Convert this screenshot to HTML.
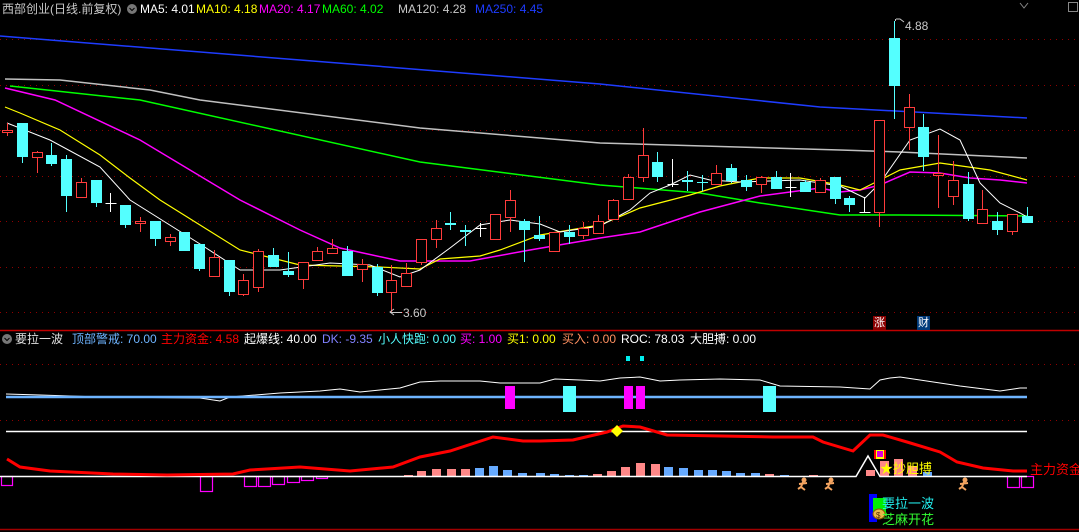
<!DOCTYPE html>
<html><head><meta charset="utf-8">
<style>
html,body{margin:0;padding:0;background:#000;width:1079px;height:532px;overflow:hidden;}
body{position:relative;font-family:"Liberation Sans","Noto Sans CJK SC",sans-serif;font-size:12px;}
.t{position:absolute;white-space:nowrap;line-height:14px;}
svg{position:absolute;left:0;top:0;}
</style></head><body>
<svg id="s" width="1079" height="532" xmlns="http://www.w3.org/2000/svg"></svg>
<div class="t" style="left:2px;top:2px;color:#c8c8c8">西部创业(日线.前复权)</div>
<div class="t" style="left:140px;top:2px;color:#fff">MA5: 4.01</div>
<div class="t" style="left:196px;top:2px;color:#ff0">MA10: 4.18</div>
<div class="t" style="left:259px;top:2px;color:#f0f">MA20: 4.17</div>
<div class="t" style="left:322px;top:2px;color:#0f0">MA60: 4.02</div>
<div class="t" style="left:398px;top:2px;color:#c8c8c8">MA120: 4.28</div>
<div class="t" style="left:475px;top:2px;color:#1e3cff">MA250: 4.45</div>
<div class="t" style="left:905px;top:19px;color:#c8c8c8">4.88</div>
<div class="t" style="left:403px;top:306px;color:#c8c8c8">3.60</div>
<div class="t" style="left:15px;top:332px;color:#e0e0e0">要拉一波</div>
<div class="t" style="left:72px;top:332px;color:#6eb4ff">顶部警戒: 70.00</div>
<div class="t" style="left:161px;top:332px;color:#f00">主力资金: 4.58</div>
<div class="t" style="left:244px;top:332px;color:#fff">起爆线: 40.00</div>
<div class="t" style="left:322px;top:332px;color:#8080ff">DK: -9.35</div>
<div class="t" style="left:378px;top:332px;color:#5ff">小人快跑: 0.00</div>
<div class="t" style="left:460px;top:332px;color:#f0f">买: 1.00</div>
<div class="t" style="left:507px;top:332px;color:#ff0">买1: 0.00</div>
<div class="t" style="left:562px;top:332px;color:#ff9060">买入: 0.00</div>
<div class="t" style="left:621px;top:332px;color:#fff">ROC: 78.03</div>
<div class="t" style="left:690px;top:332px;color:#fff">大胆搏: 0.00</div>
<div class="t" style="left:1030px;top:463px;color:#f00;font-size:13px">主力资金</div>
<div class="t" style="left:880px;top:462px;color:#ff0;font-size:13px">★抄胆搏</div>
<div class="t" style="left:882px;top:497px;color:#2ee;font-size:13px">要拉一波</div>
<div class="t" style="left:882px;top:513px;color:#3f3;font-size:13px">芝麻开花</div>
<div class="t" style="left:873px;top:316px;width:13px;height:14px;background:#8b0000;color:#fff;font-size:11px;text-align:center">涨</div>
<div class="t" style="left:917px;top:316px;width:13px;height:14px;background:#003a7a;color:#fff;font-size:11px;text-align:center">财</div>
<script>
var s=document.getElementById('s'),h='';
function L(x1,y1,x2,y2,c,w,d){h+='<line x1="'+x1+'" y1="'+y1+'" x2="'+x2+'" y2="'+y2+'" stroke="'+c+'" stroke-width="'+(w||1)+'"'+(d?' stroke-dasharray="'+d+'"':'')+'/>';}
function R(x,y,w,hh,f,st){h+='<rect x="'+x+'" y="'+y+'" width="'+w+'" height="'+hh+'" fill="'+(f||'none')+'"'+(st?' stroke="'+st+'"':'')+'/>';}
function P(pts,c,w){h+='<polyline fill="none" stroke="'+c+'" stroke-width="'+(w||1)+'" points="'+pts+'"/>';}
[39,85,130,176,221,267,312,364,420].forEach(function(y){L(0,y+.5,1079,y+.5,'#900000',1,'1 5');});
L(0,330.5,1079,330.5,'#c00000',1.5);L(0,529.5,1079,529.5,'#a00000',1.5);
P('0,36 300,60 600,84 820,107 1027,118','#1e3cff',1.5);
P('5,79 60,80 150,90 200,100 420,128 600,143 840,150 900,152 1027,158','#c0c0c0',1.5);
P('10,86 140,100 420,162 600,185 700,193 760,203 840,215 900,215 1027,216','#0f0',1.5);
P('5,88 55,100 140,140 240,200 300,230 340,248 400,261 470,261 530,250 600,238 640,232 700,212 760,196 820,188 840,192 860,190 880,185 910,172 940,173 970,178 1000,180 1027,183','#f0f',1.5);
P('5,107 20,113 60,130 100,155 130,178 160,200 200,225 240,250 300,265 380,267 420,269 440,259 480,256 500,250 540,235 600,225 640,208 690,195 720,186 760,178 800,178 840,185 860,190 900,170 940,163 990,170 1027,180','#ff0',1.2);
P('7,123 50,140 100,167 130,200 200,244 240,270 280,270 330,263 370,265 400,277 420,270 450,248 480,225 510,220 540,224 560,232 600,226 630,210 650,193 670,185 690,175 710,180 740,182 800,180 840,186 865,198 880,183 910,140 940,129 960,140 980,183 1000,203 1020,213 1027,217','#fff',1);
var C=[['r',130,132,123,136],['c',123,157,123,163],['r',152,157,151,173],['c',155,164,143,166],['c',159,196,155,212],['r',182,197,178,197],['c',180,203,180,207],['w',203,203,193,212],['c',205,225,205,228],['r',221,223,217,232],['c',221,239,221,246],['r',237,241,234,246],['c',232,251,232,251],['c',244,269,244,271],['r',257,276,250,276],['c',260,292,260,296],['r',280,294,274,296],['r',251,287,249,292],['c',255,267,248,267],['c',271,275,252,277],['r',262,279,262,289],['r',251,260,247,260],['r',248,253,239,253],['c',251,276,246,276],['r',264,269,259,282],['c',267,293,264,296],['r',280,292,265,313],['r',273,286,263,286],
['r',239,262,239,265],['r',228,239,220,248],['c',223,225,212,230],['c',230,232,225,246],['w',228,228,223,237],['r',214,239,214,239],['r',200,217,190,232],['c',221,230,219,262],['c',235,239,216,241],['r',232,251,232,252],['c',232,237,225,244],['r',228,235,222,239],['r',221,233,215,234],['r',200,219,199,219],['r',177,199,174,199],['r',155,177,128,182],['c',162,177,152,182],['w',184,184,159,187],['c',180,182,171,191],['c',182,183,175,191],['r',173,184,165,184],['c',168,181,164,183],['c',180,187,175,191],['r',177,184,176,193],['c',177,189,171,189],['w',187,187,173,197],['c',182,192,180,192],['r',180,192,178,192],['c',177,199,177,204],
['c',198,205,196,212],['w',212,212,197,212],['r',120,212,120,227],['c',38,86,21,119],['r',107,127,94,150],['c',127,157,114,171],['r',173,175,135,208],['r',180,196,161,205],['c',184,219,172,221],['r',209,223,190,223],['c',221,230,212,235],['r',214,231,214,235],['c',216,223,207,223]];
C.forEach(function(c,i){var x=Math.round(7+i*14.78)+.5,col=c[0]=='r'?'#ff3c3c':c[0]=='c'?'#54ffff':'#fff';
L(x,c[3],x,c[4],col,1);
if(c[0]=='c')R(x-5.5,c[1],11,Math.max(c[2]-c[1],1),col);
else if(c[0]=='w')L(x-5,c[1]+.5,x+6,c[1]+.5,col,1);
else {h+='<rect x="'+(x-5)+'" y="'+(c[1]+.5)+'" width="10" height="'+Math.max(c[2]-c[1],1)+'" fill="#000" stroke="'+col+'"/>';}
});
L(390,312.5,402,312.5,'#c8c8c8');P('394,309 390,312 394,315','#c8c8c8');
L(895.5,19,895.5,21,'#c8c8c8');P('896,19 900,19 904,22','#c8c8c8');
P('1020,3 1024,8 1028,3','#888');R(1068.5,2.5,9,9,'none','#888');
h+='<circle cx="132" cy="9" r="5" fill="#777"/><path d="M129.5 8l2.5 2.5 2.5-2.5" stroke="#000" fill="none"/>';
h+='<circle cx="7" cy="339" r="5" fill="#777"/><path d="M4.5 338l2.5 2.5 2.5-2.5" stroke="#000" fill="none"/>';
P('6,394 40,395 100,397 200,398 220,401 230,397 280,393 320,391 340,389 360,392 380,390 400,388 420,382 440,381 480,381 500,383 540,383 555,379 580,380 600,381 620,378 640,377 660,381 680,380 720,379 760,380 780,386 840,387 870,389 880,380 890,378 900,377 920,380 960,386 1000,391 1020,388 1027,388','#fff',1);
L(6,397,1027,397,'#6eb4ff',2.5);
R(505,386,10,23,'#f0f');R(563,386,13,26,'#5ff');R(624,386,9,23,'#f0f');R(636,386,9,23,'#f0f');R(763,386,13,26,'#5ff');
R(626,356,4,5,'#0ee');R(640,356,4,5,'#0ee');
L(6,431.5,1027,431.5,'#fff',1.5);
var bars=[[404,475,'#f88'],[417,471,'#f88'],[432,469,'#f88'],[447,469,'#f88'],[461,469,'#f88'],[475,468,'#6af'],[489,466,'#6af'],[503,470,'#6af'],[518,473,'#6af'],[536,473,'#6af'],[550,474,'#6af'],[565,475,'#6af'],[579,475,'#6af'],[593,474,'#f88'],[607,471,'#f88'],[621,467,'#f88'],[636,463,'#f88'],[651,464,'#f88'],[664,467,'#6af'],[679,468,'#6af'],[694,470,'#6af'],[708,470,'#6af'],[722,471,'#6af'],[736,473,'#6af'],[751,473,'#6af'],[765,474,'#f88'],[780,475,'#6af'],[809,475,'#f88'],[866,470,'#f88'],[880,461,'#f88'],[894,459,'#f88'],[908,466,'#f88'],[923,472,'#6af']];
bars.forEach(function(b){R(b[0],b[1],9,476-b[1],b[2]);});
[[1,12,485],[200,212,491],[244,256,486],[258,270,486],[272,284,484],[287,299,482],[301,313,480],[316,327,478],[1007,1019,487],[1021,1033,487]].forEach(function(r){h+='<rect x="'+(r[0]+.5)+'" y="476.5" width="'+(r[1]-r[0])+'" height="'+(r[2]-476)+'" fill="none" stroke="#f0f" stroke-width="1.2"/>';});
P('0,476.5 856,476.5 868,456 880,476.5 1027,476.5','#fff',1.5);
P('7,459 20,467 50,471 113,474 167,475 233,474 250,470 300,467 350,471 393,467 420,457 450,451 493,437 523,441 540,441 573,440 607,432 623,426 640,427 667,435 773,437 813,437 823,442 853,451 870,435 883,435 907,442 940,452 957,462 983,468 1013,471 1027,471','#f00',3);
h+='<polygon points="617,425 623,431 617,437 611,431" fill="#ff0"/>';
R(874,450,12,9,'#ff0');R(874,450,2,9,'#f00');R(884,450,2,9,'#f00');R(877,451,6,6,'#d0d');
[802,829,963].forEach(function(x){h+='<g stroke="#f4a460" stroke-width="2" fill="none"><circle cx="'+(x+2)+'" cy="480" r="1.5" fill="#f4a460"/><path d="M'+(x+1)+' 482 L'+(x-1)+' 487 L'+(x-4)+' 489 M'+(x-1)+' 487 L'+(x+3)+' 490 M'+(x-3)+' 484 L'+(x+5)+' 483"/></g>';});
R(869,494,8,28,'#00f');R(873,498,13,18,'#0e0');
h+='<ellipse cx="879" cy="514" rx="6" ry="5" fill="#e8b84a" stroke="#8a5a00"/><text x="876" y="518" font-size="8" fill="#5a3000" font-family="Liberation Sans">$</text>';
s.innerHTML=h;
</script>
</body></html>
